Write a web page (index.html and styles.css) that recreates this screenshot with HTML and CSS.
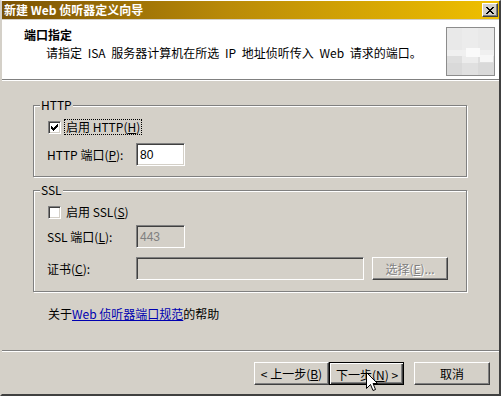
FILE: index.html
```html
<!DOCTYPE html>
<html lang="zh-CN">
<head>
<meta charset="UTF-8">
<title>新建 Web 侦听器定义向导</title>
<link rel="stylesheet" href="styles.css">
</head>
<body>

<div class="window">
  <div class="titlebar">
    <span class="title">新建 Web 侦听器定义向导</span>
    <span class="close-btn">
      <svg width="8" height="7" viewBox="0 0 8 7" shape-rendering="crispEdges">
        <path d="M0 0h2v1h-2zM6 0h2v1h-2zM1 1h2v1h-2zM5 1h2v1h-2zM2 2h4v1h-4zM3 3h2v1h-2zM2 4h4v1h-4zM1 5h2v1h-2zM5 5h2v1h-2zM0 6h2v1h-2zM6 6h2v1h-2z" fill="#000"/>
      </svg>
    </span>
  </div>

  <div class="header">
    <div class="header-text">
      <div class="header-title">端口指定</div>
      <div class="header-desc">请指定 ISA 服务器计算机在所选 IP 地址侦听传入 Web 请求的端口。</div>
    </div>
    <svg class="header-pic" width="49" height="49" viewBox="0 0 49 49" shape-rendering="crispEdges">
      <rect x="0.5" y="0.5" width="48" height="48" fill="#dedede" stroke="#8c8c8c"/>
      <rect x="1" y="1" width="47" height="22" fill="#e9e9e9"/>
      <rect x="16" y="1" width="16" height="47" fill="#ececec"/>
      <rect x="1" y="23" width="47" height="6" fill="#f0f0f0"/>
      <rect x="20" y="21" width="14" height="9" fill="#fafafa"/>
      <rect x="34" y="28" width="13" height="7" fill="#f7f7f7"/>
      <rect x="1" y="36" width="47" height="12" fill="#d9d9d9"/>
      <rect x="16" y="36" width="16" height="12" fill="#e0e0e0"/>
    </svg>
  </div>

  <div class="content">
    <fieldset class="group">
      <legend>HTTP</legend>
      <div class="row check-row">
        <span class="checkbox">
          <svg width="7" height="7" viewBox="0 0 7 7" shape-rendering="crispEdges">
            <path d="M0 2h1v3h-1zM1 3h1v3h-1zM2 4h1v3h-1zM3 3h1v3h-1zM4 2h1v3h-1zM5 1h1v3h-1zM6 0h1v3h-1z" fill="#000"/>
          </svg>
        </span>
        <span class="check-label focused">启用 HTTP(<u>H</u>)</span>
      </div>
      <div class="row field-row http-port">
        <span class="field-label">HTTP 端口(<u>P</u>):</span>
        <span class="textbox port">80</span>
      </div>
    </fieldset>

    <fieldset class="group ssl">
      <legend>SSL</legend>
      <div class="row check-row">
        <span class="checkbox"></span>
        <span class="check-label">启用 SSL(<u>S</u>)</span>
      </div>
      <div class="row field-row ssl-port">
        <span class="field-label">SSL 端口(<u>L</u>):</span>
        <span class="textbox port disabled">443</span>
      </div>
      <div class="row field-row cert">
        <span class="field-label">证书(<u>C</u>):</span>
        <span class="textbox cert-box disabled"></span>
        <span class="button disabled pick">选择(<u>E</u>)...</span>
      </div>
    </fieldset>

    <div class="help">关于<a href="#">Web 侦听器端口规范</a>的帮助</div>
  </div>

  <div class="footer">
    <span class="button">&lt; 上一步(<u>B</u>)</span>
    <span class="button default">下一步(<u>N</u>) &gt;</span>
    <span class="button cancel">取消</span>
  </div>

  <svg class="cursor" width="12" height="20" viewBox="0 0 12 20">
    <path d="M0.5 0.5 L0.5 16.5 L4.5 12.5 L7 18.5 L9.5 17.5 L7 11.5 L11.5 11.5 Z" fill="#fff" stroke="#000" stroke-width="1"/>
  </svg>
</div>

</body>
</html>
```

FILE: styles.css
```css
* {
  box-sizing: border-box;
}
body {
  margin: 0;
  font-family: "Noto Sans CJK SC", sans-serif;
  font-size: 12px;
  color: #000;
  background: #d4d0c8;
}
u {
  text-decoration: underline;
}
.window {
  position: relative;
  width: 501px;
  height: 396px;
  display: flex;
  flex-direction: column;
  background: #d4d0c8;
  border-style: solid;
  border-width: 1px 2px 2px 2px;
  border-color: #fff #404040 #404040 #d4d0c8;
  overflow: hidden;
}
.titlebar {
  height: 18px;
  margin-bottom: 1px;
  display: flex;
  align-items: center;
  justify-content: space-between;
  padding: 0 1px 0 2px;
  background: linear-gradient(to right, #7a5204, #b98a08 45%, #f0c000);
  color: #fff;
  font-weight: bold;
  line-height: 18px;
}
.close-btn {
  width: 16px;
  height: 14px;
  display: flex;
  align-items: center;
  justify-content: center;
  background: #d4d0c8;
  border: 1px solid;
  border-color: #fff #404040 #404040 #fff;
  box-shadow: inset -1px -1px 0 #808080;
}
.header {
  height: 60px;
  background: #fff;
  border-bottom: 1px solid #808080;
  display: flex;
  justify-content: space-between;
  padding: 7px 4px 0 22px;
}
.header-title {
  font-weight: bold;
  line-height: 16px;
}
.header-desc {
  margin: 2px 0 0 22px;
  line-height: 16px;
  word-spacing: 3px;
}
.content {
  height: 271px;
  border-top: 1px solid #fff;
  border-bottom: 1px solid #808080;
  padding: 17px 0 0 31px;
}
.group {
  width: 434px;
  margin: 0;
  padding: 6px 0 10px 14px;
  border: 1px solid #808080;
  box-shadow: 1px 1px 0 #fff, inset 1px 1px 0 #fff;
}
.group legend {
  margin-left: -8px;
  padding: 0 1px;
  line-height: 14px;
  background: #d4d0c8;
}
.group.ssl {
  margin-top: 6px;
  padding-bottom: 11px;
}
.row {
  display: flex;
  align-items: center;
}
.check-row {
  height: 18px;
}
.checkbox {
  width: 13px;
  height: 13px;
  display: flex;
  align-items: center;
  justify-content: center;
  background: #fff;
  border: 1px solid;
  border-color: #808080 #fff #fff #808080;
  box-shadow: inset 1px 1px 0 #404040, inset -1px -1px 0 #d4d0c8;
}
.check-label {
  margin-left: 4px;
  padding: 0 1px;
  line-height: 14px;
  outline: 1px dotted transparent;
}
.check-label.focused {
  outline-color: #000;
}
.field-row {
  height: 23px;
}
.http-port {
  margin-top: 7px;
}
.ssl-port {
  margin-top: 4px;
}
.cert {
  margin-top: 9px;
}
.field-label {
  width: 89px;
  margin-left: -1px;
}
.textbox {
  height: 23px;
  padding: 0 3px;
  display: flex;
  align-items: center;
  font-family: "Liberation Sans", sans-serif;
  background: #fff;
  border: 1px solid;
  border-color: #808080 #fff #fff #808080;
  box-shadow: inset 1px 1px 0 #404040, inset -1px -1px 0 #d4d0c8;
}
.textbox.port {
  width: 49px;
}
.textbox.cert-box {
  width: 228px;
}
.textbox.disabled {
  background: #d4d0c8;
  color: #808080;
}
.button {
  width: 75px;
  height: 23px;
  display: flex;
  align-items: center;
  justify-content: center;
  background: #d4d0c8;
  border: 1px solid;
  border-color: #fff #404040 #404040 #fff;
  box-shadow: inset -1px -1px 0 #808080;
}
.button.disabled {
  color: #808080;
  text-shadow: 1px 1px 0 #fff;
}
.button.pick {
  width: 76px;
  margin-left: 8px;
}
.button.default {
  outline: 1px solid #000;
  outline-offset: -1px;
  border-width: 2px 1px 1px 2px;
  box-shadow: inset -1px -1px 0 #404040, inset -2px -2px 0 #808080;
}
.help {
  margin: 15px 0 0 15px;
  line-height: 14px;
}
.help a {
  color: #0000b0;
  text-decoration: underline;
}
.footer {
  flex: 1;
  border-top: 1px solid #fff;
  display: flex;
  justify-content: flex-end;
  padding: 10px 9px 0 0;
}
.footer .button.cancel {
  width: 76px;
  margin-left: 10px;
}
.cursor {
  position: absolute;
  left: 364px;
  top: 371px;
}
```
